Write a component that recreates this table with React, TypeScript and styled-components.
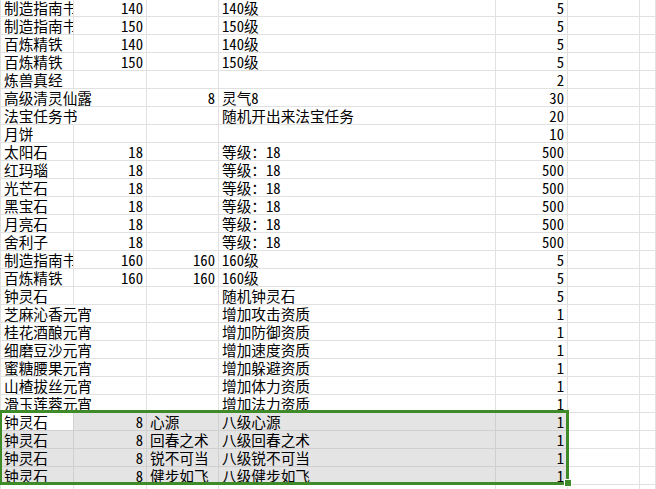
import React from "react";
import styled, { createGlobalStyle } from "styled-components";

const Global = createGlobalStyle`
  html, body { margin: 0; padding: 0; background: #ffffff; overflow: hidden; }
  body { width: 656px; height: 489px; }
`;

const Sheet = styled.div`
  position: relative;
  margin-top: -1px;
  display: grid;
  grid-template-columns: 73px 73px 72px 277px 72px 72px 1fr;
  grid-auto-rows: 18px;
  border-left: 1px solid #e1e1e1;
  font-family: "Noto Sans Mono CJK SC", "Noto Sans CJK SC", sans-serif;
  font-size: 14.67px;
  color: #000;
`;

const Cell = styled.div<{ $right?: boolean; $over?: boolean; $sel?: boolean; $active?: boolean }>`
  box-sizing: border-box;
  border-right: 1px solid ${(p) => (p.$over ? "transparent" : p.$sel ? "#d0d0d0" : "#e1e1e1")};
  border-bottom: 1px solid ${(p) => (p.$sel ? "#d0d0d0" : "#e1e1e1")};
  background: ${(p) => (p.$sel && !p.$active ? "#e4e4e4" : "transparent")};
  padding: 0 3px;
  line-height: 17px;
  white-space: nowrap;
  overflow: ${(p) => (p.$over ? "visible" : "hidden")};
  text-align: ${(p) => (p.$right ? "right" : "left")};
  position: relative;
  z-index: ${(p) => (p.$over ? 1 : 0)};
`;

const Selection = styled.div`
  position: absolute;
  left: -2px;
  top: 411px;
  width: 570px;
  height: 75px;
  box-sizing: border-box;
  border: 3px solid #3f8a29;
  pointer-events: none;
  z-index: 3;
`;

const Handle = styled.div`
  position: absolute;
  left: 563px;
  top: 480px;
  width: 6px;
  height: 6px;
  background: #3f8a29;
  border: 1px solid #ffffff;
  z-index: 4;
`;

type Row = [string, string, string, string, string, boolean?];

const rows: Row[] = [
  ["制造指南书", "140", "", "140级", "5"],
  ["制造指南书", "150", "", "150级", "5"],
  ["百炼精铁", "140", "", "140级", "5"],
  ["百炼精铁", "150", "", "150级", "5"],
  ["炼兽真经", "", "", "", "2"],
  ["高级清灵仙露", "", "8", "灵气8", "30", true],
  ["法宝任务书", "", "", "随机开出来法宝任务", "20", true],
  ["月饼", "", "", "", "10"],
  ["太阳石", "18", "", "等级：18", "500"],
  ["红玛瑙", "18", "", "等级：18", "500"],
  ["光芒石", "18", "", "等级：18", "500"],
  ["黑宝石", "18", "", "等级：18", "500"],
  ["月亮石", "18", "", "等级：18", "500"],
  ["舍利子", "18", "", "等级：18", "500"],
  ["制造指南书", "160", "160", "160级", "5"],
  ["百炼精铁", "160", "160", "160级", "5"],
  ["钟灵石", "", "", "随机钟灵石", "5"],
  ["芝麻沁香元宵", "", "", "增加攻击资质", "1", true],
  ["桂花酒酿元宵", "", "", "增加防御资质", "1", true],
  ["细磨豆沙元宵", "", "", "增加速度资质", "1", true],
  ["蜜糖腰果元宵", "", "", "增加躲避资质", "1", true],
  ["山楂拔丝元宵", "", "", "增加体力资质", "1", true],
  ["滑玉莲蓉元宵", "", "", "增加法力资质", "1", true],
  ["钟灵石", "8", "心源", "八级心源", "1"],
  ["钟灵石", "8", "回春之术", "八级回春之术", "1"],
  ["钟灵石", "8", "锐不可当", "八级锐不可当", "1"],
  ["钟灵石", "8", "健步如飞", "八级健步如飞", "1"],
  ["", "", "", "", ""],
];

export default function App() {
  return (
    <>
      <Global />
      <Sheet>
        {rows.map((r, i) => {
          const sel = i >= 23 && i <= 26;
          return (
            <React.Fragment key={i}>
              <Cell $over={r[5]} $sel={sel} $active={i === 23}>{r[0]}</Cell>
              <Cell $right $sel={sel}>{r[1]}</Cell>
              <Cell $right={/^\d+$/.test(r[2])} $sel={sel}>{r[2]}</Cell>
              <Cell $sel={sel}>{r[3]}</Cell>
              <Cell $right $sel={sel}>{r[4]}</Cell>
              <Cell />
              <Cell />
            </React.Fragment>
          );
        })}
        <Selection />
        <Handle />
      </Sheet>
    </>
  );
}
